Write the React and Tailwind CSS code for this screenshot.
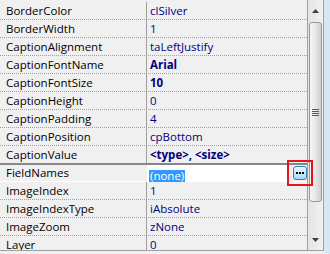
const ROWS = [
  { name: 'BorderColor',      value: 'clSilver' },
  { name: 'BorderWidth',      value: '1' },
  { name: 'CaptionAlignment', value: 'taLeftJustify' },
  { name: 'CaptionFontName',  value: 'Arial', bold: true },
  { name: 'CaptionFontSize',  value: '10', bold: true },
  { name: 'CaptionHeight',    value: '0' },
  { name: 'CaptionPadding',   value: '4' },
  { name: 'CaptionPosition',  value: 'cpBottom' },
]

const ROWS_AFTER = [
  { name: 'ImageIndex',     value: '1' },
  { name: 'ImageIndexType', value: 'iAbsolute' },
  { name: 'ImageZoom',      value: 'zNone' },
  { name: 'Layer',          value: '0' },
]

export default function App() {
  return (
    <div
      className="relative flex w-[330px] h-[254px] overflow-hidden bg-[#f0f0f0] text-[11.5px]"
      style={{ fontFamily: '"Open Sans", "Noto Sans", sans-serif' }}
    >
      <div className="flex flex-col w-[324px]">
        <div className="flex h-[251px] border-b border-[#a0a0a0]">

          {/* ── Property grid ── */}
          <div className="w-[308px] shrink-0 border-r border-[#a0a0a0] pt-[2px] overflow-hidden">
            {ROWS.map(r => <PropRow key={r.name} {...r} />)}

            {/* CaptionValue, above the selected row */}
            <div className="flex h-[19px] border-b-2 border-[#868686]">
              <div className="w-[147px] shrink-0 border-r border-[#a0a0a0] pl-[6px] leading-[17px] text-black">
                CaptionValue
              </div>
              <div className="pl-[3px] leading-[17px] font-bold text-[#000080]">&lt;type&gt;, &lt;size&gt;</div>
            </div>

            {/* FieldNames, selected */}
            <div className="flex h-[17px] border-b border-white">
              <div className="w-[147px] shrink-0 pl-[6px] leading-[16px] text-black">FieldNames</div>
              <div className="flex-1 bg-white pl-[2px] pt-[2px]">
                <span className="inline-block px-[1px] leading-[12px] h-[12px] bg-[#3399ff] text-white">(none)</span>
              </div>
              <div className="w-[19px] shrink-0 pl-[5px] pt-[1px]">
                <EllipsisButton />
              </div>
            </div>

            {ROWS_AFTER.map(r => <PropRow key={r.name} {...r} />)}
          </div>

          {/* ── Scrollbar ── */}
          <div className="w-[16px] shrink-0 flex flex-col border-r border-[#a0a0a0] bg-linear-to-r from-[#e4e4e4] to-[#f2f2f2]">
            <div className="h-[22px] flex items-center justify-center pb-[1px]">
              <ArrowIcon />
            </div>
            <div className="h-[180px] mx-[1px] rounded-[3px] border border-[#989898] bg-linear-to-r from-[#f7f7f7] via-[#e6e6e6] to-[#cfcfcf] flex flex-col items-center justify-center gap-[1px]">
              <div className="w-[7px] h-[1px] bg-[#5c5c5c]" />
              <div className="w-[7px] h-[1px] bg-[#5c5c5c]" />
              <div className="w-[7px] h-[1px] bg-[#5c5c5c]" />
              <div className="w-[7px] h-[1px] bg-[#5c5c5c]" />
            </div>
            <div className="flex-1" />
            <div className="h-[22px] flex items-center justify-center pt-[2px]">
              <ArrowIcon down />
            </div>
          </div>

        </div>
        <div className="flex-1 bg-[#f0f0f0]" />
      </div>

      {/* Window frame on the right */}
      <div className="flex-1 bg-[#dbe6f3]" />

      {/* Red highlight round the ellipsis button */}
      <div className="absolute left-[287px] top-[160px] w-[26px] h-[26px] border-2 border-[#e8141c]" />
    </div>
  )
}

function PropRow({ name, value, bold }) {
  return (
    <div className="flex h-[18px] border-b border-dotted border-[#a0a0a0]">
      <div className="w-[147px] shrink-0 border-r border-[#a0a0a0] pl-[6px] leading-[17px] text-black whitespace-nowrap">
        {name}
      </div>
      <div className={`pl-[3px] leading-[17px] text-[#000080] whitespace-nowrap ${bold ? 'font-bold' : ''}`}>
        {value}
      </div>
    </div>
  )
}

function EllipsisButton() {
  return (
    <div className="w-[14px] h-[14px] rounded-[3px] border border-[#3c7fb1] bg-linear-to-b from-[#eaf6fd] to-[#a7d9f5] flex items-center justify-center gap-[1px]">
      <div className="w-[2px] h-[2px] bg-black" />
      <div className="w-[2px] h-[2px] bg-black" />
      <div className="w-[2px] h-[2px] bg-black" />
    </div>
  )
}

function ArrowIcon({ down }) {
  return (
    <svg width="7" height="4" viewBox="0 0 7 4" style={{ transform: down ? 'rotate(180deg)' : 'none' }}>
      <polygon points="3.5,0 7,4 0,4" fill="#404040" />
    </svg>
  )
}
